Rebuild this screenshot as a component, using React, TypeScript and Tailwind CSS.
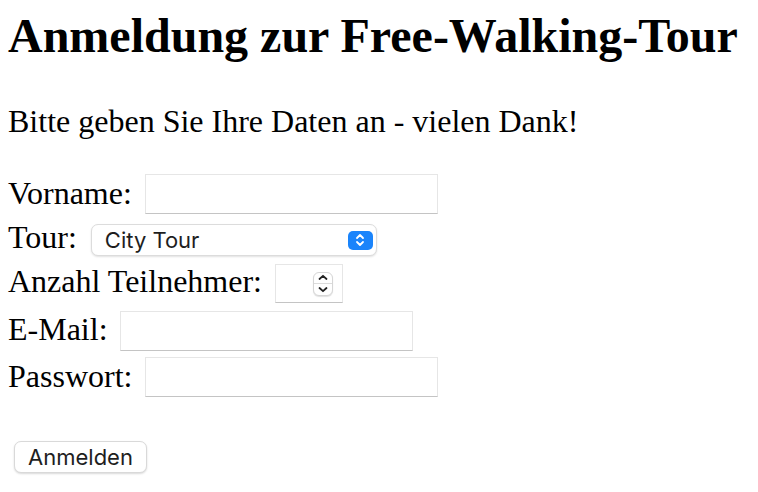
import { useState } from "react"

function SelectArrows() {
  return (
    <span className="ml-auto flex h-[19px] w-[25px] items-center justify-center rounded-[5px] bg-[#1a84fb]">
      <svg width="10" height="14" viewBox="0 0 10 14" fill="none">
        <path d="M2 5l3-3 3 3M2 9l3 3 3-3" stroke="white" strokeWidth="1.8" strokeLinecap="round" strokeLinejoin="round" />
      </svg>
    </span>
  )
}

function Spinner() {
  return (
    <span className="ml-auto mr-[9px] flex h-[24px] w-[20px] flex-col overflow-hidden rounded-[6px] border border-[#d6d6d6] bg-white shadow-[0_1px_1px_rgba(0,0,0,0.12)]">
      <span className="flex flex-1 items-center justify-center border-b border-[#dcdcdc]">
        <svg width="10" height="7" viewBox="0 0 10 7" fill="none">
          <path d="M1.5 5L5 1.8 8.5 5" stroke="#222" strokeWidth="1.8" strokeLinecap="round" strokeLinejoin="round" />
        </svg>
      </span>
      <span className="flex flex-1 items-center justify-center">
        <svg width="10" height="7" viewBox="0 0 10 7" fill="none">
          <path d="M1.5 2L5 5.2 8.5 2" stroke="#222" strokeWidth="1.8" strokeLinecap="round" strokeLinejoin="round" />
        </svg>
      </span>
    </span>
  )
}

const inputClass =
  "h-[40px] border border-[#e6e6e6] border-b-[#c4c4c4] bg-white px-1 text-[16px] outline-none"

export default function App() {
  const [tour, setTour] = useState("City Tour")

  return (
    <div className="min-h-[492px] bg-white pl-2 pt-[12px] text-black [font-family:'Liberation_Serif','Times_New_Roman',serif]">
      <h1 className="text-[48px] font-bold leading-none">Anmeldung zur Free-Walking-Tour</h1>
      <p className="mt-[45px] text-[32px] leading-none">Bitte geben Sie Ihre Daten an - vielen Dank!</p>

      <form className="mt-[37px] text-[32px] leading-none" onSubmit={(e) => e.preventDefault()}>
        <div className="flex items-start">
          <label className="mt-[3px]">Vorname:</label>
          <input type="text" className={`${inputClass} ml-[13px] w-[293px]`} />
        </div>

        <div className="mt-[7px] flex items-start">
          <label>Tour:</label>
          <div className="ml-[14px] mt-[3px] flex h-[32px] w-[286px] items-center rounded-[7px] border border-[#dcdcdc] bg-white pl-[13px] pr-[3px] shadow-[0_1px_2px_rgba(0,0,0,0.12)] [font-family:'Inter','Liberation_Sans',sans-serif]">
            <span className="text-[22px] leading-none text-[#1e1e1e]">{tour}</span>
            <SelectArrows />
            <select
              value={tour}
              onChange={(e) => setTour(e.target.value)}
              className="hidden"
            >
              <option>City Tour</option>
              <option>Altstadt Tour</option>
            </select>
          </div>
        </div>

        <div className="mt-[8px] flex items-start">
          <label className="mt-[1px]">Anzahl Teilnehmer:</label>
          <div className="ml-[13px] flex h-[39px] w-[68px] items-center border border-[#e6e6e6] border-b-[#c4c4c4] bg-white">
            <Spinner />
          </div>
        </div>

        <div className="mt-[8px] flex items-start">
          <label className="mt-[2px]">E-Mail:</label>
          <input type="email" className={`${inputClass} ml-[12px] w-[293px]`} />
        </div>

        <div className="mt-[6px] flex items-start">
          <label className="mt-[3px]">Passwort:</label>
          <input type="password" className={`${inputClass} ml-[13px] w-[293px]`} />
        </div>

        <button
          type="submit"
          className="ml-[6px] mt-[44px] flex h-[32px] w-[133px] items-center justify-center rounded-[7px] border border-[#d9d9d9] bg-white text-[22px] text-[#1e1e1e] shadow-[0_1px_2px_rgba(0,0,0,0.15)] [font-family:'Inter','Liberation_Sans',sans-serif]"
        >
          Anmelden
        </button>
      </form>
    </div>
  )
}
